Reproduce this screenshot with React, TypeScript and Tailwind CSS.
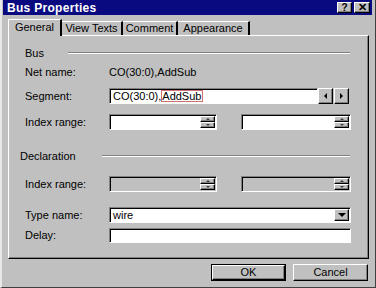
import React from "react";

const raised =
  "border-t border-l border-t-white border-l-white border-b border-r border-b-black border-r-black shadow-[inset_-1px_-1px_0_#808080]";
const sunken =
  "border-t border-l border-t-[#808080] border-l-[#808080] border-b border-r border-b-white border-r-white shadow-[inset_1px_1px_0_#000]";

function Etched({ className = "" }: { className?: string }) {
  return (
    <div className={"flex-1 flex flex-col " + className}>
      <div className="h-px bg-[#808080]" />
      <div className="h-px bg-white" />
    </div>
  );
}

function Spinner() {
  return (
    <div className="flex flex-col w-[15px] h-full">
      <div className={"flex-1 bg-[#c0c0c0] flex items-center justify-center " + raised}>
        <div className="w-0 h-0 border-l-[2px] border-r-[2px] border-b-[2px] border-l-transparent border-r-transparent border-b-[#404040]" />
      </div>
      <div className={"flex-1 bg-[#c0c0c0] flex items-center justify-center " + raised}>
        <div className="w-0 h-0 border-l-[2px] border-r-[2px] border-t-[2px] border-l-transparent border-r-transparent border-t-[#404040]" />
      </div>
    </div>
  );
}

function SpinInput({ w, disabled }: { w: string; disabled?: boolean }) {
  return (
    <div className={`${w} h-[16px] flex justify-end items-stretch pr-px py-px ${disabled ? "bg-[#c0c0c0]" : "bg-white"} ${sunken}`}>
      <Spinner />
    </div>
  );
}

export default function App() {
  return (
    <div
      className="w-[376px] h-[288px] bg-[#c0c0c0] flex flex-col border-l-2 border-l-[#e8e8e8] border-r border-r-[#404040] border-b border-b-[#404040] text-[11px] text-black leading-none"
      style={{ fontFamily: '"Liberation Sans", Arial, sans-serif' }}
    >
      {/* Title bar */}
      <div className="h-[15px] ml-px mr-[3px] bg-[#0a0a80] flex items-center pl-[4px] pr-[2px]">
        <span className="text-white font-bold text-[12px] tracking-[0.3px]">Bus Properties</span>
        <div className="flex-1" />
        <div className={"w-[15px] h-[11px] bg-[#c0c0c0] flex items-center justify-center font-bold text-[10px] " + raised}>?</div>
        <div className={"ml-[2px] w-[16px] h-[11px] bg-[#c0c0c0] flex items-center justify-center font-bold text-[11px] " + raised}>✕</div>
      </div>

      {/* Tabs */}
      <div className="mt-[4px] ml-[6px] h-[16px] flex items-end relative z-10">
        <div className="w-[54px] h-[17px] -mb-px bg-[#c0c0c0] border-t border-l border-t-white border-l-white border-r-2 border-r-black flex items-center justify-center pb-[2px]">
          General
        </div>
        <div className="w-[61px] h-[14px] border-t border-t-white border-r-2 border-r-black flex items-center justify-center">
          View Texts
        </div>
        <div className="w-[55px] h-[14px] border-t border-t-white border-r-2 border-r-black flex items-center justify-center">
          Comment
        </div>
        <div className="w-[72px] h-[14px] border-t border-t-white border-r-2 border-r-black flex items-center justify-center">
          Appearance
        </div>
      </div>

      {/* Panel */}
      <div className="ml-[6px] w-[361px] h-[224px] border-t border-l border-t-white border-l-white border-r border-b border-r-black border-b-black shadow-[inset_-1px_-1px_0_#808080] flex flex-col pl-[16px] pr-[16px]">
        <div className="mt-[11px] h-[12px] flex items-center">
          <span>Bus</span>
          <Etched className="ml-[24px] mr-[2px]" />
        </div>
        <div className="mt-[7px] h-[12px] flex items-center">
          <span className="w-[84px]">Net name:</span>
          <span>CO(30:0),AddSub</span>
        </div>
        <div className="mt-[10px] h-[16px] flex items-center">
          <span className="w-[84px]">Segment:</span>
          <div className={"w-[209px] h-[16px] bg-white flex items-center pl-[3px] " + sunken}>
            <span>CO(30:0),</span>
            <span className="border border-[#d07070] h-[12px] flex items-center pr-px">AddSub</span>
          </div>
          <div className={"w-[15px] h-[16px] bg-[#c0c0c0] flex items-center justify-center " + raised}>
            <div className="w-0 h-0 border-t-[3px] border-b-[3px] border-r-[3px] border-t-transparent border-b-transparent border-r-black" />
          </div>
          <div className={"ml-px w-[15px] h-[16px] bg-[#c0c0c0] flex items-center justify-center " + raised}>
            <div className="w-0 h-0 border-t-[3px] border-b-[3px] border-l-[3px] border-t-transparent border-b-transparent border-l-black" />
          </div>
        </div>
        <div className="mt-[10px] h-[16px] flex items-center">
          <span className="w-[84px]">Index range:</span>
          <SpinInput w="w-[108px]" />
          <div className="w-[24px]" />
          <SpinInput w="w-[110px]" />
        </div>

        <div className="mt-[20px] h-[12px] flex items-center -ml-[5px]">
          <span>Declaration</span>
          <Etched className="ml-[26px] mr-[2px]" />
        </div>
        <div className="mt-[14px] h-[16px] flex items-center">
          <span className="w-[84px]">Index range:</span>
          <SpinInput w="w-[108px]" disabled />
          <div className="w-[24px]" />
          <SpinInput w="w-[110px]" disabled />
        </div>
        <div className="mt-[15px] h-[16px] flex items-center">
          <span className="w-[84px]">Type name:</span>
          <div className={"w-[242px] h-[16px] bg-white flex items-center pl-[3px] pr-px py-px " + sunken}>
            <span className="flex-1">wire</span>
            <div className={"w-[15px] h-full bg-[#c0c0c0] flex items-center justify-center " + raised}>
              <div className="w-0 h-0 border-l-[4px] border-r-[4px] border-t-[4px] border-l-transparent border-r-transparent border-t-black" />
            </div>
          </div>
        </div>
        <div className="mt-[5px] h-[15px] flex items-center">
          <span className="w-[84px]">Delay:</span>
          <div className={"w-[242px] h-[15px] bg-white " + sunken} />
        </div>
      </div>

      {/* Buttons */}
      <div className="mt-[5px] flex justify-end pr-[7px] gap-[7px]">
        <div className="w-[75px] h-[17px] border border-black">
          <div className={"w-full h-full bg-[#c0c0c0] flex items-center justify-center " + raised}>OK</div>
        </div>
        <div className={"w-[75px] h-[17px] bg-[#c0c0c0] flex items-center justify-center " + raised}>Cancel</div>
      </div>
    </div>
  );
}
